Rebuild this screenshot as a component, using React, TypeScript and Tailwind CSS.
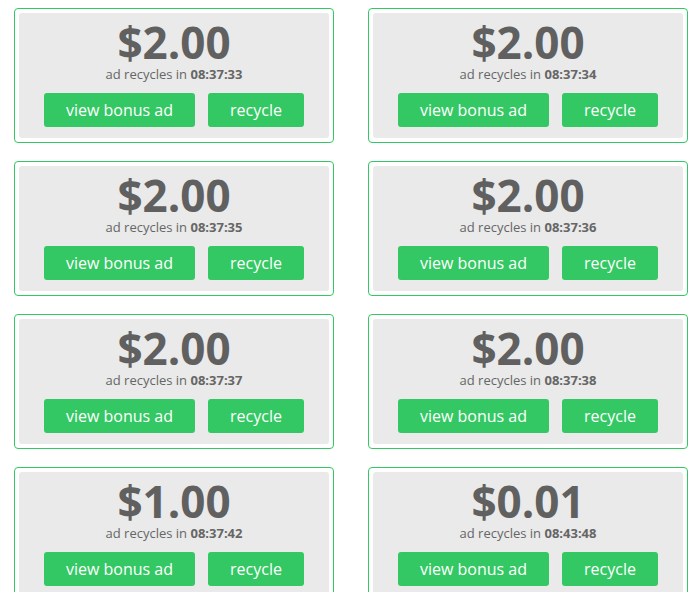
const ads = [
  { amount: "$2.00", time: "08:37:33" },
  { amount: "$2.00", time: "08:37:34" },
  { amount: "$2.00", time: "08:37:35" },
  { amount: "$2.00", time: "08:37:36" },
  { amount: "$2.00", time: "08:37:37" },
  { amount: "$2.00", time: "08:37:38" },
  { amount: "$1.00", time: "08:37:42" },
  { amount: "$0.01", time: "08:43:48" },
];

function AdCard({ amount, time }: { amount: string; time: string }) {
  return (
    <div className="rounded-[4px] border border-[#33c863] bg-white p-[4px]">
      <div className="flex flex-col items-center rounded-[3px] bg-[#eaeaea] pt-[7px] pb-[11px]">
        <div className="text-[44px] leading-[44px] font-bold text-[#606060]">{amount}</div>
        <div className="mt-px text-[13px] leading-[18px] text-[#666666]">
          ad recycles in <span className="font-bold">{time}</span>
        </div>
        <div className="mt-[10px] flex gap-[13px]">
          <button type="button" className="h-[34px] w-[151px] rounded-[3px] bg-[#33c863] text-[16px] text-white">
            view bonus ad
          </button>
          <button type="button" className="h-[34px] w-[96px] rounded-[3px] bg-[#33c863] text-[16px] text-white">
            recycle
          </button>
        </div>
      </div>
    </div>
  );
}

export default function App() {
  return (
    <div className="h-[592px] w-[700px] overflow-hidden bg-white pt-[8px] pl-[14px] font-['Open_Sans',sans-serif]">
      <div className="grid grid-cols-[320px_320px] gap-x-[34px] gap-y-[18px]">
        {ads.map((ad, i) => (
          <AdCard key={i} amount={ad.amount} time={ad.time} />
        ))}
      </div>
    </div>
  );
}
